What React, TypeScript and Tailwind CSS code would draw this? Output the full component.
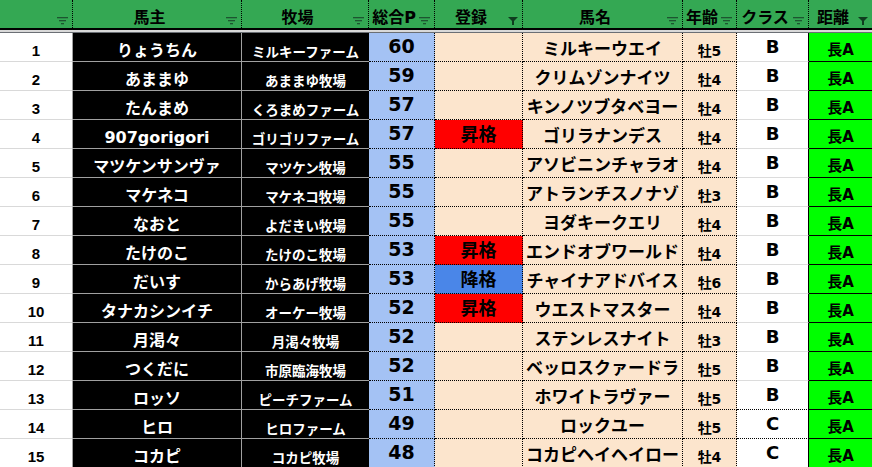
import React from "react";

type Row = {
  n: number;
  owner: string;
  farm: string;
  p: number;
  reg: "" | "昇格" | "降格";
  horse: string;
  age: string;
  cls: string;
};

const rows: Row[] = [
  { n: 1, owner: "りょうちん", farm: "ミルキーファーム", p: 60, reg: "", horse: "ミルキーウエイ", age: "牡5", cls: "B" },
  { n: 2, owner: "あままゆ", farm: "あままゆ牧場", p: 59, reg: "", horse: "クリムゾンナイツ", age: "牡4", cls: "B" },
  { n: 3, owner: "たんまめ", farm: "くろまめファーム", p: 57, reg: "", horse: "キンノツブタベヨー", age: "牡4", cls: "B" },
  { n: 4, owner: "907gorigori", farm: "ゴリゴリファーム", p: 57, reg: "昇格", horse: "ゴリラナンデス", age: "牡4", cls: "B" },
  { n: 5, owner: "マツケンサンヴァ", farm: "マツケン牧場", p: 55, reg: "", horse: "アソビニンチャラオ", age: "牡4", cls: "B" },
  { n: 6, owner: "マケネコ", farm: "マケネコ牧場", p: 55, reg: "", horse: "アトランチスノナゾ", age: "牡3", cls: "B" },
  { n: 7, owner: "なおと", farm: "よだきい牧場", p: 55, reg: "", horse: "ヨダキークエリ", age: "牡4", cls: "B" },
  { n: 8, owner: "たけのこ", farm: "たけのこ牧場", p: 53, reg: "昇格", horse: "エンドオブワールド", age: "牡4", cls: "B" },
  { n: 9, owner: "だいす", farm: "からあげ牧場", p: 53, reg: "降格", horse: "チャイナアドバイス", age: "牡6", cls: "B" },
  { n: 10, owner: "タナカシンイチ", farm: "オーケー牧場", p: 52, reg: "昇格", horse: "ウエストマスター", age: "牡4", cls: "B" },
  { n: 11, owner: "月渇々", farm: "月渇々牧場", p: 52, reg: "", horse: "ステンレスナイト", age: "牡3", cls: "B" },
  { n: 12, owner: "つくだに", farm: "市原臨海牧場", p: 52, reg: "", horse: "ベッロスクァードラ", age: "牡5", cls: "B" },
  { n: 13, owner: "ロッソ", farm: "ピーチファーム", p: 51, reg: "", horse: "ホワイトラヴァー", age: "牡5", cls: "B" },
  { n: 14, owner: "ヒロ", farm: "ヒロファーム", p: 49, reg: "", horse: "ロックユー", age: "牡5", cls: "C" },
  { n: 15, owner: "コカピ", farm: "コカピ牧場", p: 48, reg: "", horse: "コカピヘイヘイロー", age: "牡4", cls: "C" },
];

const JP = "font-['DejaVu_Sans','Noto_Sans_CJK_JP',sans-serif]";
const GRID = "grid grid-cols-[73px_169px_127px_66px_88px_160px_54px_72px_63px]";

function FilterIcon({ active }: { active?: boolean }) {
  if (active) {
    return (
      <svg width="10" height="8" viewBox="0 0 10 8" className="absolute right-[4px] top-[17px]">
        <polygon points="0,0 10,0 6,4 6,8 4,8 4,4" fill="#0f3d1f" />
      </svg>
    );
  }
  return (
    <svg width="11" height="8" viewBox="0 0 11 8" className="absolute right-[4px] top-[17px]">
      <rect x="0" y="0" width="11" height="1.3" fill="#1d5530" />
      <rect x="2" y="3" width="7" height="1.3" fill="#1d5530" />
      <rect x="4" y="6" width="3" height="1.3" fill="#1d5530" />
    </svg>
  );
}

function H({ label, active, last }: { label: string; active?: boolean; last?: boolean }) {
  return (
    <div
      className={`relative h-[28px] flex items-end justify-center pb-[2px] pr-[15px] ${
        last ? "" : "border-r border-dotted border-black"
      }`}
    >
      <span className={`${JP} font-bold text-[16px] leading-none text-black`}>{label}</span>
      <FilterIcon active={active} />
    </div>
  );
}

export default function App() {
  return (
    <div className="w-[872px] h-[467px] overflow-hidden bg-white">
      <div className={`${GRID} bg-[#34a853]`}>
        <H label="" />
        <H label="馬主" />
        <H label="牧場" />
        <H label="総合P" />
        <H label="登録" active />
        <H label="馬名" />
        <H label="年齢" />
        <H label="クラス" />
        <H label="距離" active last />
      </div>
      <div className="h-[2px] bg-black" />
      <div className="h-[2px] bg-[#d9d9d9]" />
      <div className="h-[1px] bg-[#6b6f75]" />
      {rows.map((r) => {
        const hDotted = r.n === 13 || r.n === 14;
        const regBg =
          r.reg === "昇格" ? "bg-[#ff0000]" : r.reg === "降格" ? "bg-[#4a86e8]" : "bg-[#fce5cd]";
        return (
          <div key={r.n} className={GRID}>
            <div className="h-[29px] bg-white border-r border-r-[#a0a0a0] border-b border-b-[#d9d9d9] flex items-end justify-center pb-[3px]">
              <span className="font-['Liberation_Sans',Arial,sans-serif] font-bold text-[15px] leading-none text-black">
                {r.n}
              </span>
            </div>
            <div className="h-[29px] bg-black border-r border-r-[#a0a0a0] border-b border-b-[#a0a0a0] flex items-end justify-center pb-[2px]">
              <span className={`${JP} font-bold text-[16px] leading-none text-white whitespace-nowrap`}>{r.owner}</span>
            </div>
            <div className="h-[29px] bg-black border-b border-b-[#a0a0a0] flex items-end justify-center pb-[2px]">
              <span className={`${JP} font-bold text-[13.5px] leading-none text-white whitespace-nowrap`}>{r.farm}</span>
            </div>
            <div className="h-[29px] bg-[#a4c2f4] border-r border-b border-dotted border-black flex items-end justify-center pb-[5px]">
              <span className={`${JP} font-bold text-[19px] leading-none text-black`}>{r.p}</span>
            </div>
            <div className={`h-[29px] ${regBg} border-r border-b border-dotted border-black flex items-end justify-center pb-[4px]`}>
              <span className={`${JP} font-bold text-[18px] leading-none text-black`}>{r.reg}</span>
            </div>
            <div className="h-[29px] bg-[#fce5cd] border-r border-b border-dotted border-black flex items-end justify-center pb-[3px]">
              <span className={`${JP} font-bold text-[17px] leading-none text-black whitespace-nowrap`}>{r.horse}</span>
            </div>
            <div className="h-[29px] bg-[#fce5cd] border-r border-b border-dotted border-black flex items-end justify-center pb-[3px]">
              <span className={`${JP} font-bold text-[14px] leading-none text-black`}>{r.age}</span>
            </div>
            <div
              className={`h-[29px] bg-white border-r border-r-black border-b flex items-end justify-center pb-[5px] ${
                hDotted
                  ? "border-b-black [border-bottom-style:dotted] [border-right-style:solid]"
                  : "border-b-[#dcdcdc]"
              }`}
            >
              <span className={`${JP} font-bold text-[18px] leading-none text-black`}>{r.cls}</span>
            </div>
            <div className="h-[29px] bg-[#00ff00] border-b border-b-black flex items-end justify-center pb-[3px]">
              <span className={`${JP} font-bold text-[15px] leading-none text-black`}>長A</span>
            </div>
          </div>
        );
      })}
    </div>
  );
}
